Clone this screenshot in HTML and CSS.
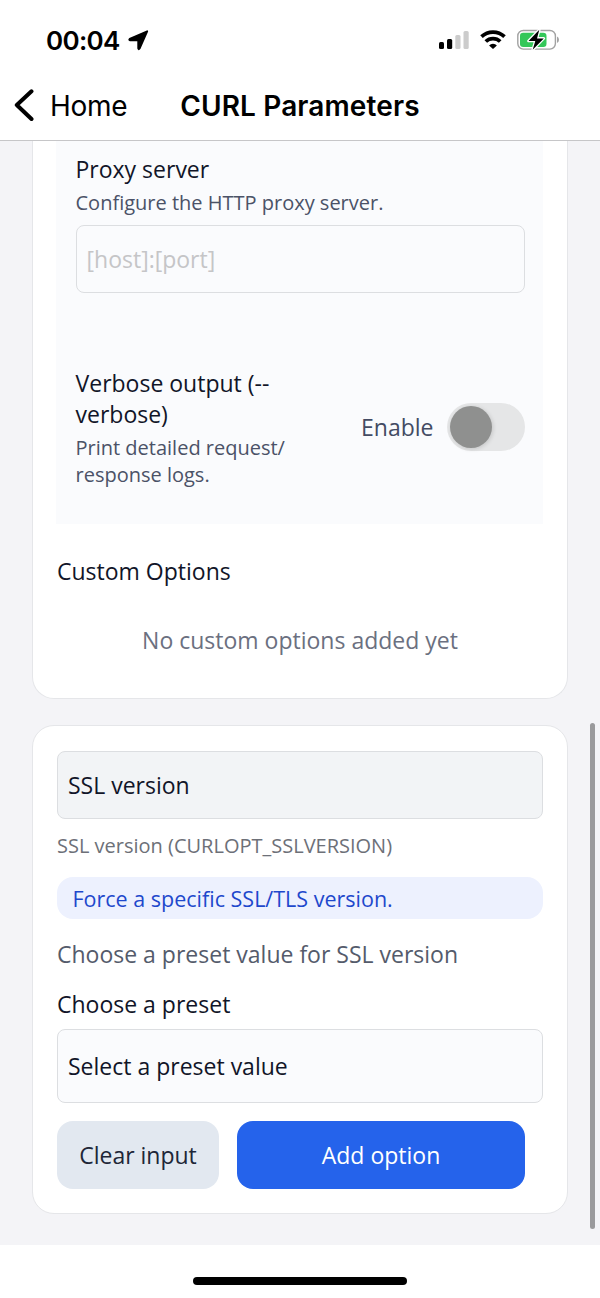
FILE: index.html
```html
<!DOCTYPE html>
<html lang="en">
<head>
<meta charset="utf-8">
<title>CURL Parameters</title>
<link rel="stylesheet" href="styles.css">
</head>
<body>
<div class="phone">
  <div class="statusbar">
    <span class="clock">00:04</span>
    <svg class="location" width="21" height="21" viewBox="0 0 21 21"><path d="M19.200 1.300 11.600 18.600Q10.600 20 10.200 18.400V11.200Q10.200 10.300 9.300 10.300H2.100Q.6 10 1.700 8.900Z" fill="#000" stroke="#000" stroke-width="1.800" stroke-linejoin="round"/></svg>
    <svg class="signal" width="30" height="20" viewBox="0 0 30 20"><rect x="0" y="12" width="5" height="7" rx="1.500"/><rect x="8" y="9" width="5.200" height="10" rx="1.500"/><rect x="16.300" y="5" width="5.200" height="14" rx="1.500" fill="#ccc"/><rect x="24.500" y="1" width="5.200" height="18" rx="1.500" fill="#ccc"/></svg>
    <svg class="wifi" width="26" height="20" viewBox="0 0 26 20"><g fill="none" stroke="#000" stroke-width="3.700"><path d="M1.500 6.700A16.600 16.600 0 0 1 24.500 6.700"/><path d="M5.800 11.500A10.300 10.300 0 0 1 20.200 11.500"/></g><path d="M13 19 9.100 15.400A5.400 5.400 0 0 1 16.900 15.400Z"/></svg>
    <svg class="battery" width="43" height="22" viewBox="0 0 43 22"><rect x=".8" y="1.500" width="37.600" height="18.600" rx="5.500" fill="#fff" stroke="#a2a2a2" stroke-width="1.400"/><path d="M40 7.500q2 1 2 3.300t-2 3.300Z" fill="#a2a2a2"/><rect x="3" y="3.700" width="26.500" height="14.200" rx="3.200" fill="#34c759"/><path d="M22.300.8 11.500 12h6.800l-2.600 8.800L26.800 9.400H20Z" fill="#000" stroke="#fff" stroke-width="2.600" paint-order="stroke" stroke-linejoin="round"/></svg>
  </div>
  <header class="navbar">
    <svg class="back" width="20" height="34" viewBox="0 0 20 34"><path d="M17.500 2.300 2.800 16 17.500 30" fill="none" stroke="#000" stroke-width="4" stroke-linecap="round" stroke-linejoin="round"/></svg>
    <span class="back-label">Home</span>
    <h1 class="title">CURL Parameters</h1>
  </header>
  <main class="content">
    <section class="card options">
      <div class="panel">
        <div class="label">Proxy server</div>
        <div class="hint">Configure the HTTP proxy server.</div>
        <div class="field placeholder">[host]:[port]</div>
        <div class="row">
          <div class="row-text">
            <div class="label">Verbose output (--<br>verbose)</div>
            <div class="hint">Print detailed request/<br>response logs.</div>
          </div>
          <span class="enable">Enable</span>
          <span class="switch"><span class="knob"></span></span>
        </div>
      </div>
      <div class="label custom">Custom Options</div>
      <div class="empty">No custom options added yet</div>
    </section>
    <section class="card editor">
      <div class="field filled">SSL version</div>
      <div class="caption">SSL version (CURLOPT_SSLVERSION)</div>
      <div class="notice">Force a specific SSL/TLS version.</div>
      <div class="choose">Choose a preset value for SSL version</div>
      <div class="label preset">Choose a preset</div>
      <div class="field select">Select a preset value</div>
      <div class="actions">
        <button class="btn clear">Clear input</button>
        <button class="btn add">Add option</button>
      </div>
    </section>
    <div class="scrollbar"></div>
  </main>
  <footer class="home-area"><div class="home-indicator"></div></footer>
</div>
</body>
</html>
```
FILE: styles.css
```css
* { box-sizing: border-box; }
body { margin: 0; background: #fff; }
.phone {
  width: 600px;
  height: 1298px;
  display: flex;
  flex-direction: column;
  overflow: hidden;
  font-family: "Open Sans", sans-serif;
  font-size: 23px;
  color: #111528;
}
.statusbar {
  height: 80px;
  padding: 0 40px 0 46px;
  display: flex;
  align-items: center;
  font-family: Inter, sans-serif;
  color: #000;
}
.clock { padding-top: 1px; font-size: 26px; font-weight: 600; line-height: 30px; letter-spacing: -.7px; }
.location { margin-left: 8px; }
.signal { margin-left: auto; }
.wifi { margin-left: 11px; }
.battery { margin-left: 11px; }
.navbar {
  height: 61px;
  padding: 0 14px 9px;
  border-bottom: 1px solid #c6c6c8;
  display: flex;
  align-items: center;
  font-family: Inter, sans-serif;
  color: #000;
}
.back-label { margin-left: 16px; font-size: 28px; letter-spacing: -.3px; }
.title { margin: 0 0 0 53px; font-size: 28px; font-weight: 600; letter-spacing: .12px; white-space: nowrap; }
.content {
  position: relative;
  height: 1104px;
  padding: 0 32px;
  background: #f4f4f7;
}
.card { background: #fff; border: 1px solid #e5e6e9; }
.options {
  height: 558px;
  padding: 0 24px;
  border-top: 0;
  border-radius: 0 0 22px 22px;
}
.panel {
  height: 383px;
  margin-left: -1px;
  padding: 13px 18.500px 0 19.500px;
  background: #fafbfd;
}
.label { line-height: 31px; white-space: nowrap; }
.hint { margin-top: 4px; font-size: 20px; line-height: 27px; color: #4b5267; white-space: nowrap; }
.field {
  height: 68px;
  padding: 0 10px;
  border: 1px solid #dcdee1;
  border-radius: 8px;
  display: flex;
  align-items: center;
}
.placeholder { margin-top: 9px; color: #c5c5c7; }
.row { margin-top: 75px; display: flex; align-items: center; }
.row-text { flex: 1; }
.enable { padding-bottom: 2px; color: #434b63; }
.switch {
  width: 78px;
  height: 48px;
  margin: 0 0 2px 13px;
  padding: 3px;
  border-radius: 24px;
  background: #e5e6e7;
}
.knob { display: block; width: 42px; height: 42px; border-radius: 50%; background: #8f908f; box-shadow: 1px 1px 4px rgba(0,0,0,.15); }
.custom { margin-top: 32px; }
.empty { margin-top: 38px; line-height: 31px; text-align: center; color: #6b7080; }
.editor {
  height: 489px;
  margin-top: 26px;
  padding: 25px 24px 24px;
  border-radius: 22px;
}
.filled { background: #f2f4f6; }
.caption { margin-top: 13px; font-size: 20px; line-height: 27px; color: #6d7078; }
.notice {
  height: 42px;
  margin-top: 18px;
  padding: 0 15.5px;
  border-radius: 16px;
  background: #edf1fe;
  color: #1e48cc;
  font-size: 21.5px;
  line-height: 43px;
}
.choose { margin-top: 20px; line-height: 31px; color: #545b6b; }
.preset { margin-top: 19px; }
.select { height: 74px; margin-top: 9px; background: #fafbfd; }
.actions { margin-top: 18px; padding-right: 18px; display: flex; gap: 18px; }
.btn { height: 68px; padding: 0; border: 0; border-radius: 16px; font: inherit; }
.clear { width: 162px; background: #e2e8f0; color: #202637; }
.add { flex: 1; background: #2563eb; color: #fff; }
.scrollbar {
  position: absolute;
  top: 582px;
  right: 5px;
  width: 5px;
  height: 506px;
  border-radius: 3px;
  background: #9a9a9c;
}
.home-area { flex: 1; padding-top: 32px; background: #fff; }
.home-indicator { width: 214px; height: 8px; margin: 0 auto; border-radius: 4px; background: #000; }
```
